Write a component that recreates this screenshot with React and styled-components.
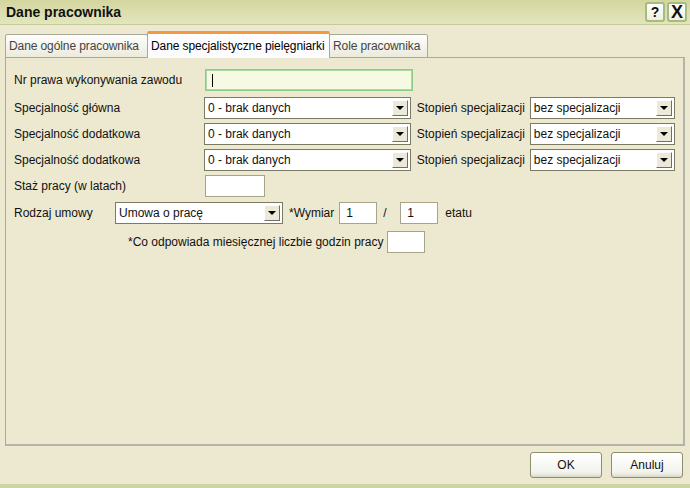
import React from "react";
import styled, { createGlobalStyle } from "styled-components";

const GlobalStyle = createGlobalStyle`
  html, body {
    margin: 0;
    padding: 0;
    background: #ece9d0;
  }
  * {
    box-sizing: border-box;
  }
`;

const FONT = `"Liberation Sans", Arial, sans-serif`;

const Window = styled.div`
  width: 690px;
  height: 488px;
  display: flex;
  flex-direction: column;
  background: #ece9d0;
  font-family: ${FONT};
  font-size: 12px;
  color: #111;
  border-bottom: 4px solid #cdd4a4;
`;

const TitleBar = styled.div`
  height: 25px;
  display: flex;
  align-items: center;
  justify-content: space-between;
  padding: 0 3px 0 6px;
  background: linear-gradient(#d3d69f, #e3e6bd);
  border-bottom: 1px solid #c3cc98;
`;

const Title = styled.div`
  font-weight: bold;
  font-size: 14px;
  color: #111;
`;

const TitleButtons = styled.div`
  display: flex;
  gap: 2px;
`;

const TitleButton = styled.div`
  width: 20px;
  height: 20px;
  display: flex;
  align-items: center;
  justify-content: center;
  border: 2px solid #a7bb7e;
  border-radius: 3px;
  background: linear-gradient(#ffffff, #eef0df);
  font-weight: bold;
  font-size: ${(p) => (p.$big ? "18px" : "14px")};
  line-height: 1;
`;

const Body = styled.div`
  flex: 1;
  display: flex;
  flex-direction: column;
  padding: 6px 5px 0 5px;
`;

const TabStrip = styled.div`
  display: flex;
  align-items: flex-end;
  height: 27px;
  position: relative;
  z-index: 1;
  margin-bottom: -1px;
`;

const Tab = styled.div`
  height: ${(p) => (p.$active ? "27px" : "24px")};
  padding: 0 3px;
  display: flex;
  align-items: center;
  border: 1px solid #a9a99a;
  border-bottom: ${(p) => (p.$active ? "none" : "1px solid #a9a99a")};
  border-top: ${(p) => (p.$active ? "3px solid #f29a3f" : "1px solid #a9a99a")};
  border-radius: 2px 2px 0 0;
  background: ${(p) =>
    p.$active ? "#fcfcfe" : "linear-gradient(#fefefe, #eceadb)"};
  color: ${(p) => (p.$active ? "#000" : "#444")};
  margin-left: ${(p) => (p.$active ? "-1px" : "0")};
  margin-right: ${(p) => (p.$active ? "-1px" : "0")};
  width: ${(p) => p.$w}px;
  white-space: nowrap;
  letter-spacing: -0.1px;
`;

const Panel = styled.div`
  height: 389px;
  border: 1px solid #a9a99a;
  border-right: 2px solid #b5b4a8;
  border-bottom: 2px solid #b5b4a8;
  padding: 11px 8px;
  display: flex;
  flex-direction: column;
`;

const Row = styled.div`
  display: flex;
  align-items: center;
  height: 22px;
  margin-top: ${(p) => p.$mt || 0}px;
  padding-left: ${(p) => p.$indent || 0}px;
`;

const Label = styled.div`
  width: ${(p) => (p.$w ? `${p.$w}px` : "auto")};
  margin-right: ${(p) => p.$mr || 0}px;
  white-space: nowrap;
`;

const TextBox = styled.div`
  width: ${(p) => p.$w}px;
  height: 22px;
  border: 1px solid ${(p) => (p.$focus ? "#8bcc88" : "#a6a58a")};
  box-shadow: ${(p) => (p.$focus ? "inset 0 0 0 1px #a9d8a4" : "none")};
  background: ${(p) => (p.$focus ? "#f6fae2" : "#ffffff")};
  display: flex;
  align-items: center;
  padding-left: 6px;
  margin-right: ${(p) => p.$mr || 0}px;
`;

const Caret = styled.div`
  width: 1px;
  height: 13px;
  background: #000;
`;

const Select = styled.div`
  width: ${(p) => p.$w}px;
  height: 22px;
  border: 1px solid #7b7b64;
  background: #fff;
  display: flex;
  align-items: center;
  justify-content: space-between;
  padding: 2px 2px 2px 3px;
  margin-right: ${(p) => p.$mr || 0}px;
`;

const DropButton = styled.div`
  width: 16px;
  height: 16px;
  background: #ece9d8;
  border: 1px solid;
  border-color: #fff #716f64 #716f64 #fff;
  display: flex;
  align-items: center;
  justify-content: center;
  &::after {
    content: "";
    border-left: 4px solid transparent;
    border-right: 4px solid transparent;
    border-top: 4px solid #000;
  }
`;

const Footer = styled.div`
  flex: 1;
  display: flex;
  justify-content: flex-end;
  align-items: center;
  gap: 9px;
  padding-right: 2px;
`;

const Button = styled.div`
  width: 72px;
  height: 26px;
  display: flex;
  align-items: center;
  justify-content: center;
  border: 1px solid #8b8f6a;
  border-radius: 3px;
  background: linear-gradient(#ffffff, #f3f3ee 80%, #dcdccf);
  box-shadow: inset 0 -1px 0 #d8d8c8;
`;

const Combo = ({ value, w, mr }) => (
  <Select $w={w} $mr={mr}>
    <span>{value}</span>
    <DropButton />
  </Select>
);

const specRows = [
  "Specjalność główna",
  "Specjalność dodatkowa",
  "Specjalność dodatkowa",
];

const App = () => (
  <>
    <GlobalStyle />
    <Window>
      <TitleBar>
        <Title>Dane pracownika</Title>
        <TitleButtons>
          <TitleButton>?</TitleButton>
          <TitleButton $big>X</TitleButton>
        </TitleButtons>
      </TitleBar>
      <Body>
        <TabStrip>
          <Tab $w={143}>Dane ogólne pracownika</Tab>
          <Tab $active $w={183}>Dane specjalistyczne pielęgniarki</Tab>
          <Tab $w={99}>Role pracownika</Tab>
        </TabStrip>
        <Panel>
          <Row>
            <Label $w={191}>Nr prawa wykonywania zawodu</Label>
            <TextBox $w={208} $focus>
              <Caret />
            </TextBox>
          </Row>
          {specRows.map((label, i) => (
            <Row key={i} $mt={i === 0 ? 6 : 4}>
              <Label $w={191}>{label}</Label>
              <Combo value="0 - brak danych" w={208} mr={6} />
              <Label $mr={5}>Stopień specjalizacji</Label>
              <Combo value="bez specjalizacji" w={146} />
            </Row>
          ))}
          <Row $mt={4}>
            <Label $w={191}>Staż pracy (w latach)</Label>
            <TextBox $w={60} />
          </Row>
          <Row $mt={5}>
            <Label $w={101}>Rodzaj umowy</Label>
            <Combo value="Umowa o pracę" w={168} mr={6} />
            <Label $mr={5}>*Wymiar</Label>
            <TextBox $w={38} $mr={6}>1</TextBox>
            <Label $w={17}>/</Label>
            <TextBox $w={38} $mr={7}>1</TextBox>
            <Label>etatu</Label>
          </Row>
          <Row $mt={7} $indent={114}>
            <Label $mr={4}>*Co odpowiada miesięcznej liczbie godzin pracy</Label>
            <TextBox $w={38} />
          </Row>
        </Panel>
        <Footer>
          <Button>OK</Button>
          <Button>Anuluj</Button>
        </Footer>
      </Body>
    </Window>
  </>
);

export default App;
